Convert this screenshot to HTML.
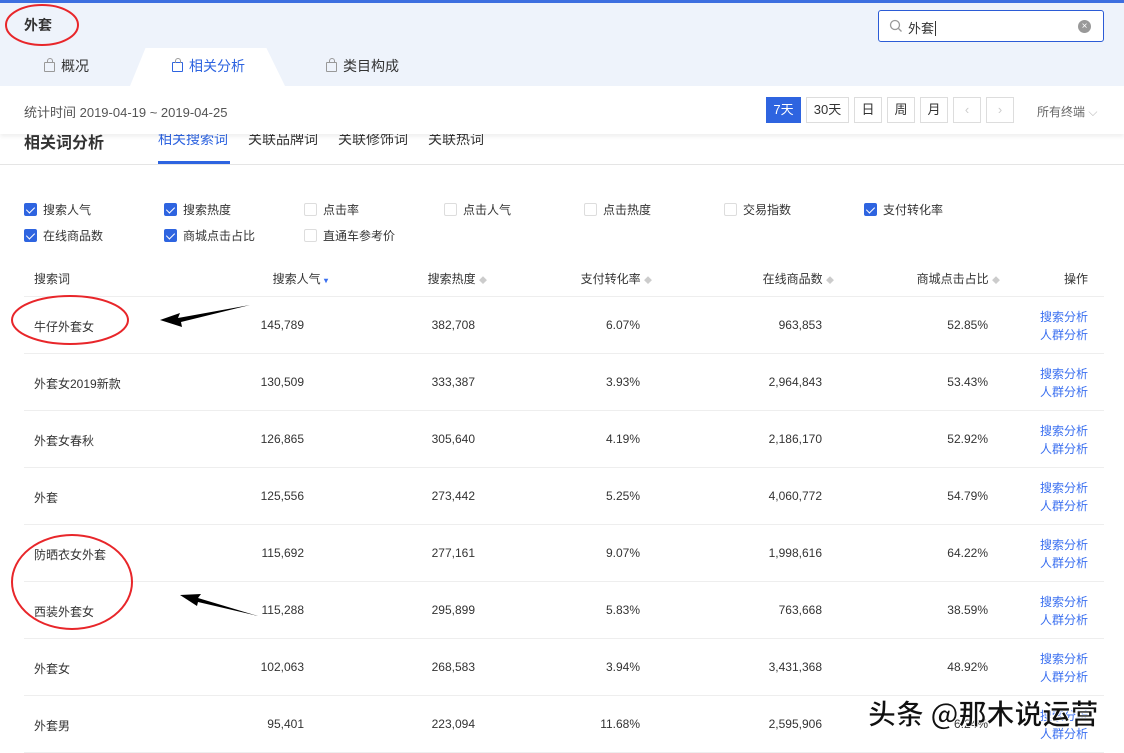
<!DOCTYPE html>
<html><head><meta charset="utf-8"><style>
*{margin:0;padding:0;box-sizing:border-box}
body{width:1124px;height:749px;overflow:hidden;background:#fff;font-family:"Liberation Sans","Noto Sans CJK SC",sans-serif;color:#333;position:relative;font-size:12px}
.top{position:absolute;left:0;top:0;width:1124px;height:86px;background:#eef3fb;border-top:3px solid #3d6fe0}
.abs{position:absolute;white-space:nowrap}
.tabact{position:absolute;left:130px;top:48px;width:155px;height:38px;background:#fff;clip-path:polygon(10% 0,88% 0,100% 100%,0 100%);border-radius:12px 12px 0 0}
.bag{display:inline-block;width:11px;height:10px;border:1.5px solid #999;border-radius:1px;margin-right:6px;vertical-align:-1px;position:relative}
.bag:before{content:"";position:absolute;left:2px;top:-5px;width:4px;height:4px;border:1.5px solid #999;border-bottom:none;border-radius:3px 3px 0 0}
.btn{position:absolute;top:97px;height:26px;border:1px solid #ddd;text-align:center;line-height:24px;font-size:13px;color:#333}
.cb{position:absolute;font-size:12px;color:#333}
.cb i{display:inline-block;width:13px;height:13px;border:1px solid #ddd;border-radius:2px;vertical-align:-2px;margin-right:6px;position:relative}
.cb i.on{background:#2e64e0;border-color:#2e64e0}
.cb i.on:after{content:"";position:absolute;left:3px;top:1px;width:4px;height:7px;border:solid #fff;border-width:0 1.5px 1.5px 0;transform:rotate(45deg)}
.row{position:absolute;left:24px;width:1080px;height:57px;border-bottom:1px solid #eee;font-size:12px}
.row span{position:absolute;top:21px;white-space:nowrap}
.op{color:#3a6ff0;line-height:18px;top:11px!important;right:16px}
</style></head><body>
<div class="top"></div>
<div class="abs" style="left:24px;top:15px;font-size:14px;font-weight:bold;color:#333">外套</div>
<div class="abs" style="left:878px;top:10px;width:226px;height:32px;background:#fff;border:1px solid #2b5bd6;border-radius:3px">
<svg style="position:absolute;left:10px;top:8px" width="14" height="14" viewBox="0 0 14 14"><circle cx="6" cy="6" r="4.5" fill="none" stroke="#999" stroke-width="1.3"/><path d="M9.5 9.5L12.5 12.5" stroke="#999" stroke-width="1.3"/></svg>
<span style="position:absolute;left:29px;top:7px;font-size:13px;color:#333">外套<span style="border-left:1px solid #333;margin-left:1px"></span></span>
<span style="position:absolute;right:12px;top:9px;width:13px;height:13px;border-radius:50%;background:#999;color:#fff;font-size:10px;line-height:13px;text-align:center">×</span></div>
<div class="tabact"></div>
<div class="abs" style="left:44px;top:56px;font-size:14px;color:#333"><i class="bag"></i>概况</div>
<div class="abs" style="left:172px;top:56px;font-size:14px;color:#2e64e0"><i class="bag" style="border-color:#2e64e0"></i>相关分析</div>
<div class="abs" style="left:326px;top:56px;font-size:14px;color:#333"><i class="bag"></i>类目构成</div>
<div class="abs" style="left:24px;top:102px;font-size:13px;color:#555">统计时间 2019-04-19 ~ 2019-04-25</div>
<div class="btn" style="left:766px;width:35px;background:#2e64e0;border-color:#2e64e0;color:#fff">7天</div>
<div class="btn" style="left:806px;width:43px">30天</div>
<div class="btn" style="left:854px;width:28px">日</div>
<div class="btn" style="left:887px;width:28px">周</div>
<div class="btn" style="left:920px;width:28px">月</div>
<div class="btn" style="left:953px;width:28px;color:#ccc">‹</div>
<div class="btn" style="left:986px;width:28px;color:#ccc">›</div>
<div class="abs" style="left:1037px;top:103px;font-size:12px;color:#666">所有终端 <span style="color:#bbb">⌵</span></div>
<div class="abs" style="left:0;top:134px;width:1124px;height:31px;border-bottom:1px solid #e5e5e5;overflow:hidden">
<div class="abs" style="left:24px;top:-5px;font-size:16px;font-weight:bold;color:#333">相关词分析</div>
<div class="abs" style="left:158px;top:-5px;font-size:14px;color:#2e64e0">相关搜索词</div>
<div class="abs" style="left:158px;top:27px;width:72px;height:3px;background:#2e64e0"></div>
<div class="abs" style="left:248px;top:-5px;font-size:14px">关联品牌词</div>
<div class="abs" style="left:338px;top:-5px;font-size:14px">关联修饰词</div>
<div class="abs" style="left:428px;top:-5px;font-size:14px">关联热词</div>
</div>
<div class="abs" style="left:0;top:86px;width:1124px;height:48px;box-shadow:0 3px 4px rgba(0,0,0,.06)"></div>
<div class="cb" style="left:24px;top:201px"><i class="on"></i>搜索人气</div>
<div class="cb" style="left:164px;top:201px"><i class="on"></i>搜索热度</div>
<div class="cb" style="left:304px;top:201px"><i></i>点击率</div>
<div class="cb" style="left:444px;top:201px"><i></i>点击人气</div>
<div class="cb" style="left:584px;top:201px"><i></i>点击热度</div>
<div class="cb" style="left:724px;top:201px"><i></i>交易指数</div>
<div class="cb" style="left:864px;top:201px"><i class="on"></i>支付转化率</div>
<div class="cb" style="left:24px;top:227px"><i class="on"></i>在线商品数</div>
<div class="cb" style="left:164px;top:227px"><i class="on"></i>商城点击占比</div>
<div class="cb" style="left:304px;top:227px"><i></i>直通车参考价</div>
<div class="row" style="top:240px"><span style="left:10px;top:30px">搜索词</span><span style="right:776px;top:30px">搜索人气 <b style="color:#3a6ff0;font-size:8px">▾</b></span><span style="right:617px;top:30px">搜索热度 <b style="color:#ccc;font-size:8px">◆</b></span><span style="right:452px;top:30px">支付转化率 <b style="color:#ccc;font-size:8px">◆</b></span><span style="right:270px;top:30px">在线商品数 <b style="color:#ccc;font-size:8px">◆</b></span><span style="right:104px;top:30px">商城点击占比 <b style="color:#ccc;font-size:8px">◆</b></span><span style="right:16px;top:30px">操作</span></div>
<div id="rows"></div>
<script>
var d=[["牛仔外套女","145,789","382,708","6.07%","963,853","52.85%"],["外套女2019新款","130,509","333,387","3.93%","2,964,843","53.43%"],["外套女春秋","126,865","305,640","4.19%","2,186,170","52.92%"],["外套","125,556","273,442","5.25%","4,060,772","54.79%"],["防晒衣女外套","115,692","277,161","9.07%","1,998,616","64.22%"],["西装外套女","115,288","295,899","5.83%","763,668","38.59%"],["外套女","102,063","268,583","3.94%","3,431,368","48.92%"],["外套男","95,401","223,094","11.68%","2,595,906","6.24%"]];
var h="";d.forEach(function(r,i){var t=297+i*57;h+='<div class="row" style="top:'+t+'px"><span style="left:10px">'+r[0]+'</span><span style="right:800px">'+r[1]+'</span><span style="right:629px">'+r[2]+'</span><span style="right:464px">'+r[3]+'</span><span style="right:282px">'+r[4]+'</span><span style="right:116px">'+r[5]+'</span><span class="op">搜索分析<br>人群分析</span></div>'});
document.getElementById("rows").innerHTML=h;
</script>
<svg class="abs" style="left:0;top:0" width="1124" height="749">
<ellipse cx="42" cy="25" rx="36" ry="20" fill="none" stroke="#e8262a" stroke-width="2"/>
<ellipse cx="70" cy="320" rx="58" ry="24" fill="none" stroke="#e8262a" stroke-width="2"/>
<ellipse cx="72" cy="582" rx="60" ry="47" fill="none" stroke="#e8262a" stroke-width="2"/>
<path d="M250 305 L178 318 L180 313 L160 320 L182 327 L181 322 Z" fill="#000"/>
<path d="M258 616 L198 598 L201 594 L180 595 L197 606 L198 602 Z" fill="#000"/>
<text x="868" y="724" font-size="28" font-weight="bold" font-family="Noto Sans CJK SC,sans-serif" fill="#111" stroke="#fff" stroke-width="0.8">头条 @那木说运营</text>
</svg>
</body></html>
